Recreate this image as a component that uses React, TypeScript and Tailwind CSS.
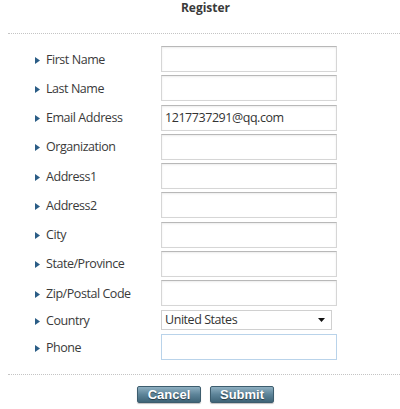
import React from "react"

const fields = [
    { label: "First Name", value: "" },
    { label: "Last Name", value: "" },
    { label: "Email Address", value: "1217737291@qq.com" },
    { label: "Organization", value: "" },
    { label: "Address1", value: "" },
    { label: "Address2", value: "" },
    { label: "City", value: "" },
    { label: "State/Province", value: "" },
    { label: "Zip/Postal Code", value: "" },
]

function Label({ text }: { text: string }) {
    return (
        <div className="flex w-[161px] shrink-0 items-center pl-[35px] pt-[2px] text-[12.5px] tracking-[-0.45px] text-[#3a3a3a]">
            <svg width="5" height="7" viewBox="0 0 5 7" className="mr-[6px]">
                <path d="M0 0 L5 3.5 L0 7 Z" fill="#2b5d86" />
            </svg>
            <span>{text}</span>
        </div>
    )
}

function TextBox({ value, focused }: { value: string; focused?: boolean }) {
    return (
        <input
            readOnly
            value={value}
            className={
                focused
                    ? "h-[26px] w-[176px] border border-[#b9d3ea] bg-white px-[3px] text-[12.5px] tracking-[-0.45px] text-[#333] outline-none"
                    : "h-[26px] w-[176px] border border-[#d6d6d6] border-t-[#b8b8b8] bg-white px-[3px] text-[12.5px] tracking-[-0.45px] text-[#333] shadow-[inset_0_1px_2px_rgba(0,0,0,0.08)] outline-none"
            }
            style={{ fontFamily: '"Open Sans", sans-serif' }}
        />
    )
}

export default function App() {
    return (
        <div
            className="h-[409px] w-[400px] bg-white"
            style={{ fontFamily: '"Open Sans", "Liberation Sans", sans-serif' }}
        >
            <div className="text-center text-[12px] font-bold leading-[16px] text-[#3a3a3a]">
                <span className="ml-[11px]">Register</span>
            </div>

            <div className="ml-[8px] mt-[17px] border-t border-dotted border-[#c4c4c4]" />

            <div className="pt-[12px]">
                {fields.map((f) => (
                    <div key={f.label} className="flex h-[29.25px] items-start">
                        <div className="flex h-[26px] items-center">
                            <Label text={f.label} />
                        </div>
                        <TextBox value={f.value} />
                    </div>
                ))}

                <div className="mt-[1px] flex h-[24px] items-start">
                    <div className="flex h-[20px] items-center">
                        <Label text="Country" />
                    </div>
                    <div className="flex h-[20px] w-[171px] items-center justify-between border border-[#d0d0d0] bg-white pl-[3px] pr-[6px] text-[12.5px] tracking-[-0.45px] text-[#333]">
                        <span>United States</span>
                        <svg width="7" height="4" viewBox="0 0 7 4">
                            <path d="M0 0 H7 L3.5 4 Z" fill="#111" />
                        </svg>
                    </div>
                </div>

                <div className="flex h-[26px] items-start">
                    <div className="flex h-[26px] items-center">
                        <Label text="Phone" />
                    </div>
                    <TextBox value="" focused />
                </div>
            </div>

            <div className="ml-[8px] mt-[14px] border-t border-dotted border-[#c4c4c4]" />

            <div className="mt-[11px] flex justify-center gap-[9px] pl-[11px]">
                {["Cancel", "Submit"].map((b) => (
                    <button
                        key={b}
                        className="h-[17px] w-[64px] rounded-[2px] border border-[#3d5d6e] bg-gradient-to-b from-[#8fb0c2] via-[#5d8499] to-[#3f6578] text-[13px] font-bold leading-[15px] text-white shadow-[0_1px_1px_rgba(0,0,0,0.25)] [text-shadow:0_1px_1px_rgba(0,0,0,0.5)]"
                        style={{ fontFamily: '"Liberation Sans", Arial, sans-serif' }}
                    >
                        {b}
                    </button>
                ))}
            </div>
        </div>
    )
}
